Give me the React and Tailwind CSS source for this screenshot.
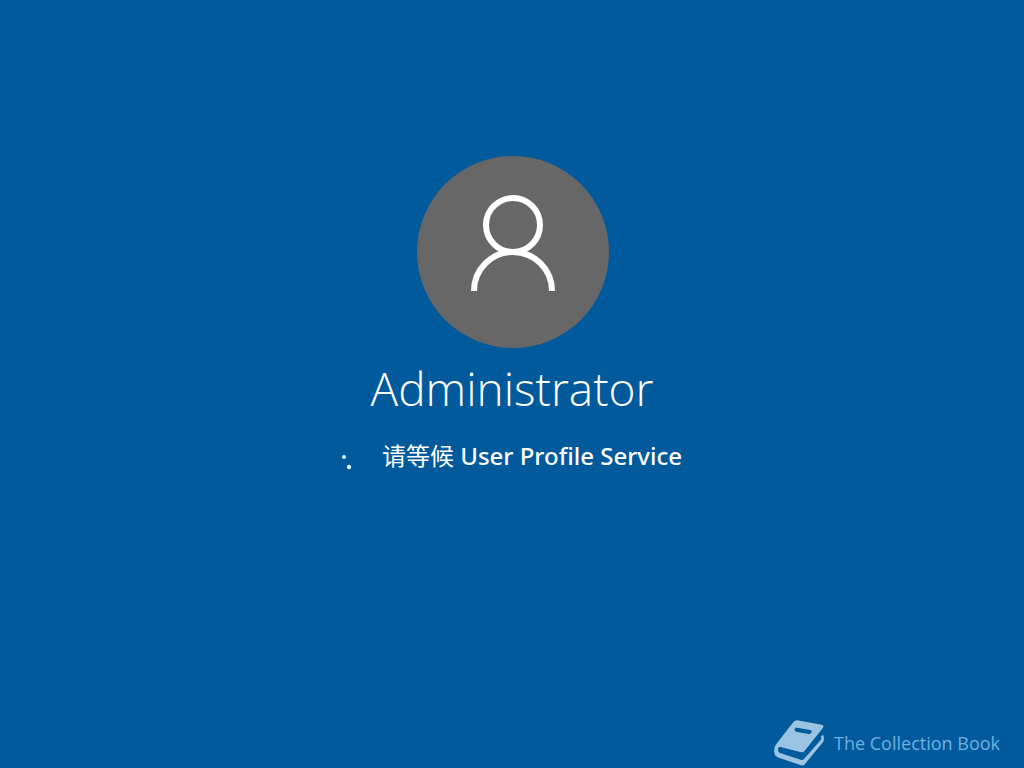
import React from 'react';

function UserAvatar() {
  return (
    <div className="w-48 h-48 rounded-full bg-[#676767] ml-px">
      <svg viewBox="0 0 192 192" className="w-full h-full" fill="none" stroke="#fff" strokeWidth="6" aria-hidden="true">
        <circle cx="96" cy="69" r="27" />
        <path d="M57 135a39 39 0 0 1 78 0" />
      </svg>
    </div>
  );
}

function Spinner() {
  return (
    <svg viewBox="0 0 40 32" className="w-10 h-8 shrink-0" fill="#d9f0ff" aria-hidden="true">
      <circle cx="2" cy="17" r="2" />
      <circle cx="7" cy="27" r="2.2" />
    </svg>
  );
}

function BookLogo() {
  return (
    <svg viewBox="0 0 162 150" className="w-[54px] h-[50px] shrink-0" aria-hidden="true">
      {/* Cover */}
      <path
        d="M76 7L149 20Q158 22 152 31L98 98Q93 104 85 102L25 87Q19 86 18 92Q17 101 24 105L88 126Q92 127 96 123L148 64L147 55L153 50Q157 54 155 70L99 138Q94 144 87 142L17 118Q7 113 7 102Q5 88 13 78L62 15Q68 6 76 7Z"
        fill="#9cc3e2"
      />
      {/* Label slot */}
      <path d="M75 29L115 36Q122 38 118 44Q115 49 109 48L73 41Q66 39 68 34Q70 28 75 29Z" fill="#005a9b" />
    </svg>
  );
}

export default function App() {
  return (
    <div className="min-h-screen flex flex-col bg-[#005a9b] text-white font-['Open_Sans','Noto_Sans_CJK_SC',sans-serif]">
      <main className="grow flex flex-col items-center pt-[156px]">
        <UserAvatar />
        <h1 className="mt-2 text-[46px] leading-[64px] font-light">Administrator</h1>
        <div className="mt-5 flex items-center" role="status">
          <Spinner />
          <p className="text-[24px] leading-[32px] whitespace-nowrap font-['Noto_Sans','Noto_Sans_CJK_SC',sans-serif]">
            请等候 <span className="font-medium">User Profile Service</span>
          </p>
        </div>
      </main>

      <footer className="flex items-center justify-end gap-2 pr-6">
        <BookLogo />
        <span className="text-[18px] leading-[24px] text-[#6fb0e0]">The Collection Book</span>
      </footer>
    </div>
  );
}
